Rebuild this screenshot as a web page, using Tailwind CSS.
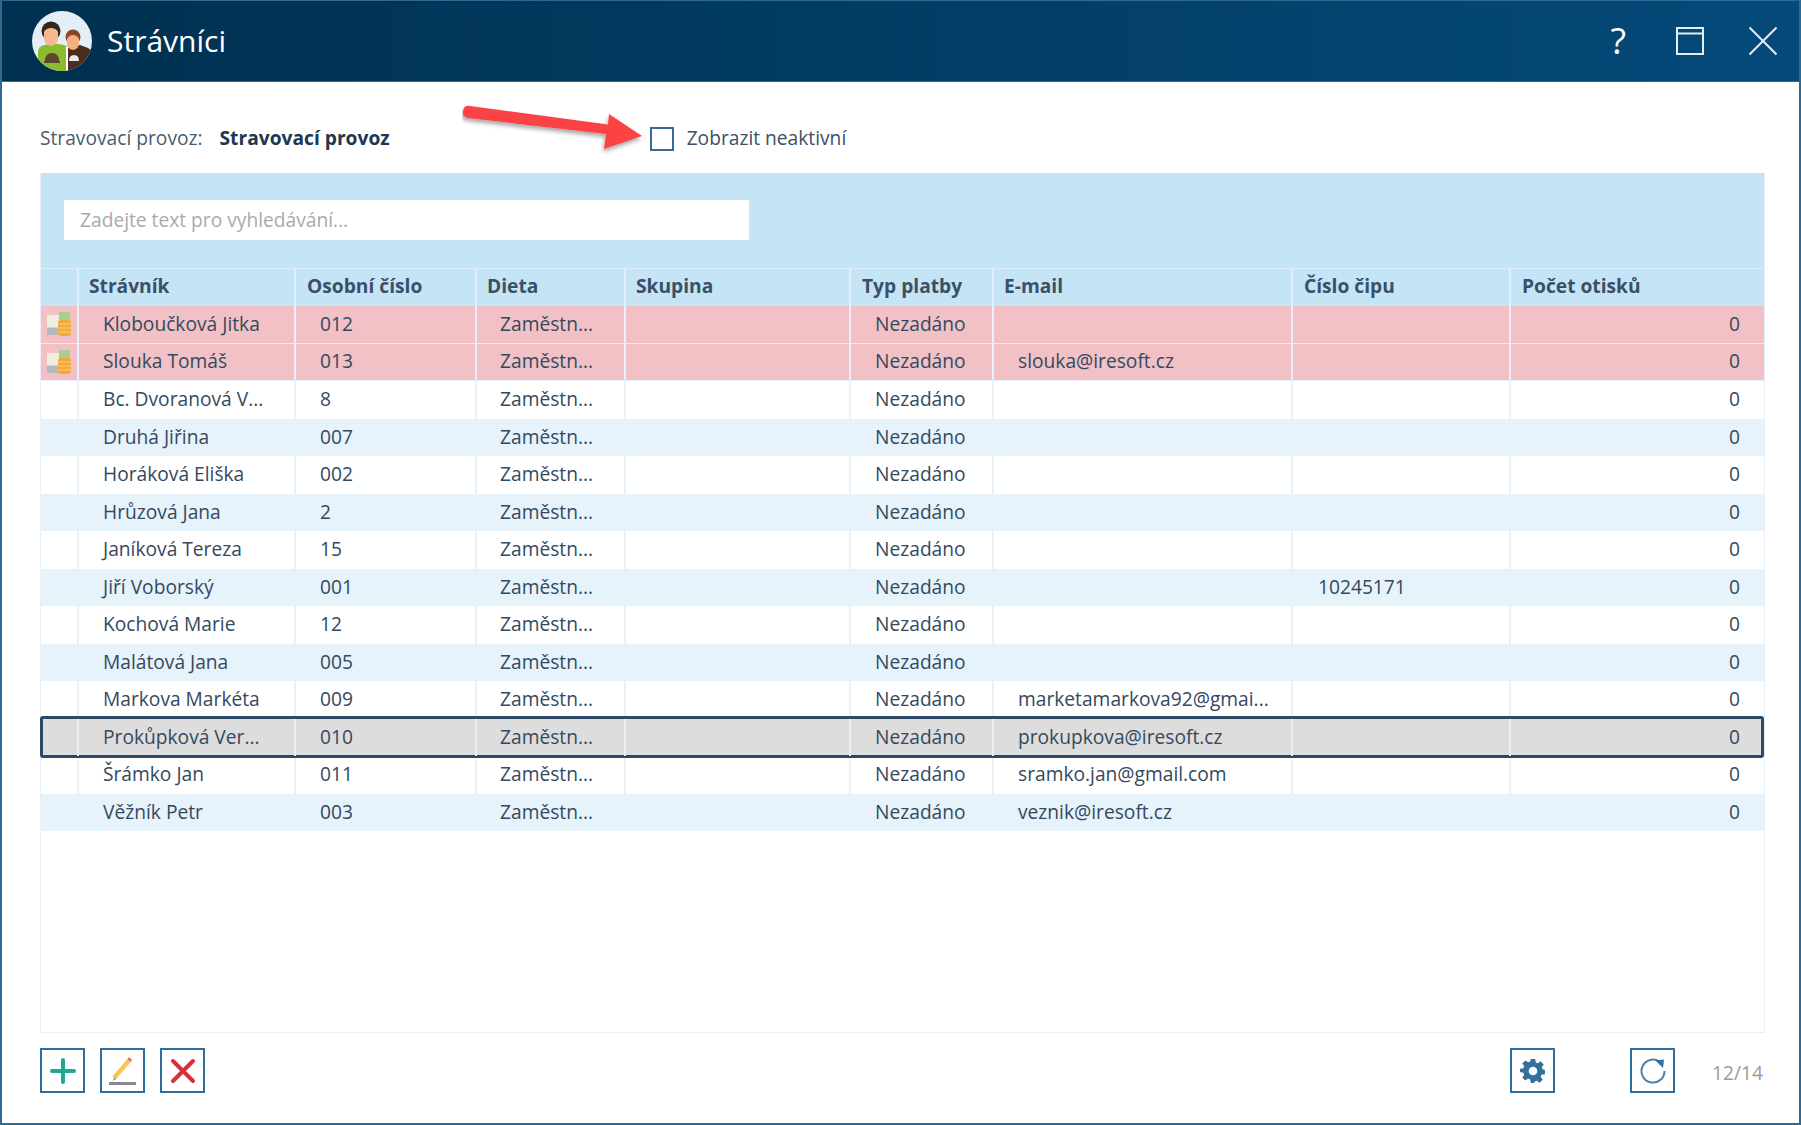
<!DOCTYPE html>
<html lang="cs">
<head>
  <meta charset="UTF-8" />
  <title>Strávníci</title>
  <script src="https://cdn.jsdelivr.net/npm/@tailwindcss/browser@4"></script>
</head>
<body class="bg-white">
  <div class="relative flex flex-col w-[1801px] h-[1125px] overflow-hidden bg-white border-x-2 border-b-2 border-[#2f6a94] font-['Open_Sans',sans-serif] text-[19.2px] text-[#34495e]">

    <!-- title bar -->
    <header class="flex items-center h-[82px] shrink-0 border-t border-b border-[#2f6a94] bg-gradient-to-r from-[#00304f] to-[#054a7a] text-white">
      <svg class="ml-[30px] w-[60px] h-[60px]" viewBox="0 0 60 60">
        <defs><clipPath id="avatar"><circle cx="30" cy="30" r="30" /></clipPath></defs>
        <g clip-path="url(#avatar)">
          <rect width="60" height="60" fill="#e3eef6" />
          <path d="M6 60V41q0-6 7-7l7-2 12 2q4 1 4 6v20z" fill="#8dbb2f" />
          <path d="M34 60V38l6-3 8-1 8 3q4 2 4 6v17z" fill="#4b2d1f" />
          <rect x="34" y="36" width="2" height="24" fill="#fff" />
          <circle cx="19" cy="20" r="9.500" fill="#33261f" />
          <path d="M12 21q2-4 7-4t7 4v5q0 8-7 9-7-1-7-9z" fill="#f5b78e" />
          <circle cx="41" cy="26" r="7.500" fill="#8a4522" />
          <path d="M35 28q2-4 6-4t6 4v4q0 6-6 7-6-1-6-7z" fill="#f5ae80" />
          <path d="M13 50q0-8 7-8t7 8z" fill="#5c4630" />
          <rect x="12" y="50" width="16" height="2" fill="#5c4630" />
          <path d="M37 50q0-6 5-6t5 6z" fill="#e8e8e8" />
        </g>
      </svg>
      <h1 class="ml-[15px] text-[30px] leading-none font-normal">Strávníci</h1>
      <div class="ml-auto flex items-center">
        <span class="text-[36px] leading-none font-normal mr-[50px]">?</span>
        <svg class="w-[28px] h-[28px] mr-[44px]" viewBox="0 0 28 28" fill="none" stroke="#e6eef4" stroke-width="2">
          <rect x="1" y="1" width="26" height="26" />
          <path d="M1 6.500h26" />
        </svg>
        <svg class="w-[30px] h-[30px] mr-[21px]" viewBox="0 0 30 30" fill="none" stroke="#e6eef4" stroke-width="2">
          <path d="M1.500 1.500l27 27M28.500 1.500l-27 27" />
        </svg>
      </div>
    </header>

    <!-- filter row -->
    <div class="flex items-center h-[91px] shrink-0 pt-[22px] pl-[38px]">
      <span class="text-[#4a5c6e]">Stravovací provoz:</span>
      <span class="ml-[17px] font-bold text-[#22364e]">Stravovací provoz</span>
      <span class="ml-[260px] w-[24px] h-[24px] border-2 border-[#3a6a96]"></span>
      <span class="ml-[13px] text-[#3c5068]">Zobrazit neaktivní</span>
    </div>

    <!-- table -->
    <main class="flex flex-col flex-1 min-h-0 ml-[38px] mr-[34px] border border-t-0 border-[#e8f0fb]">
      <div class="h-[95px] shrink-0 bg-[#c5e4f6] pt-[27px] pl-[23px]">
        <div class="flex items-center w-[685px] h-[40px] pl-[16px] bg-white text-[#aaaaaa]">Zadejte text pro vyhledávání...</div>
      </div>
      <div class="grid grid-cols-[38px_217px_181px_149px_225px_143px_299px_218px_1fr] h-[38px] shrink-0 items-stretch bg-[#c5e4f6] border-t border-[#dcecf8] font-bold text-[#3a5068]">
        <div class="border-r-2 border-[#e3f0fa]"></div>
        <div class="flex items-center pb-[3px] pl-[10px] border-r-2 border-[#e3f0fa]">Strávník</div>
        <div class="flex items-center pb-[3px] pl-[11px] border-r-2 border-[#e3f0fa]">Osobní číslo</div>
        <div class="flex items-center pb-[3px] pl-[10px] border-r-2 border-[#e3f0fa]">Dieta</div>
        <div class="flex items-center pb-[3px] pl-[10px] border-r-2 border-[#e3f0fa]">Skupina</div>
        <div class="flex items-center pb-[3px] pl-[11px] border-r-2 border-[#e3f0fa]">Typ platby</div>
        <div class="flex items-center pb-[3px] pl-[10px] border-r-2 border-[#e3f0fa]">E-mail</div>
        <div class="flex items-center pb-[3px] pl-[11px] border-r-2 border-[#e3f0fa]">Číslo čipu</div>
        <div class="flex items-center pb-[3px] pl-[11px]">Počet otisků</div>
      </div>
      <div id="rows" class="flex-1 min-h-0"></div>
    </main>

    <!-- toolbar -->
    <footer class="flex items-start h-[90px] shrink-0 pt-[15px] pl-[38px]">
      <button class="flex items-center justify-center w-[45px] h-[45px] border-2 border-[#2f6f9f]">
        <svg class="w-[28px] h-[28px]" viewBox="0 0 28 28" stroke="#1fa98f" stroke-width="4" stroke-linecap="round"><path d="M14 3v22M3 14h22" /></svg>
      </button>
      <button class="flex items-center justify-center w-[45px] h-[45px] ml-[15px] border-2 border-[#2f6f9f]">
        <svg class="w-[30px] h-[30px]" viewBox="0 0 30 30" fill="none">
          <path d="M6 22L22 3.500" stroke="#f6c65b" stroke-width="4.500" />
          <path d="M21 4.500l1.500-2" stroke="#e8697a" stroke-width="4" />
          <path d="M6.500 20.500L4.500 25l4-2z" fill="#a9a3a8" />
          <path d="M1 27.500h27" stroke="#8d8296" stroke-width="3" />
        </svg>
      </button>
      <button class="flex items-center justify-center w-[45px] h-[45px] ml-[15px] border-2 border-[#2f6f9f]">
        <svg class="w-[26px] h-[26px]" viewBox="0 0 26 26" stroke="#d6303a" stroke-width="4" stroke-linecap="round"><path d="M3 3l20 20M23 3L3 23" /></svg>
      </button>
      <button class="flex items-center justify-center w-[45px] h-[45px] ml-auto border-2 border-[#2f6f9f]">
        <svg class="w-[26px] h-[26px]" viewBox="0 0 24 24" fill="#34709c">
          <path fill-rule="evenodd" d="M10 1h4l.6 3.100 1.900.8 2.600-1.800 2.800 2.800-1.800 2.600.8 1.900L23 11v4l-3.100.5-.8 1.900 1.800 2.600-2.800 2.800-2.600-1.800-1.900.8L13 23h-3l-.6-3.200-1.900-.8-2.600 1.800-2.800-2.800 1.800-2.600-.8-1.900L0 13v-3l3.100-.6.800-1.900L2.100 5l2.800-2.800L7.500 4l1.900-.8zM12 8a4 4 0 1 0 0 8 4 4 0 0 0 0-8z" />
        </svg>
      </button>
      <button class="flex items-center justify-center w-[45px] h-[45px] ml-[75px] border-2 border-[#2f6f9f]">
        <svg class="w-[28px] h-[28px]" viewBox="0 0 28 28" fill="none">
          <path d="M22 5.800A11.500 11.500 0 1 0 25.500 14" stroke="#4a80a8" stroke-width="2" />
          <path d="M16.500 3.500L25 2.500l-1 8.500z" fill="#34709c" />
        </svg>
      </button>
      <span class="ml-[37px] mr-[36px] mt-[11px] text-[#9a9a9a]">12/14</span>
    </footer>

    <!-- red annotation arrow -->
    <svg class="absolute left-[460px] top-[100px] w-[190px] h-[60px]" viewBox="460 100 190 60">
      <defs>
        <filter id="arrowshadow" x="-10%" y="-30%" width="120%" height="170%">
          <feDropShadow dx="-1" dy="3" stdDeviation="2" flood-color="#000" flood-opacity="0.35" />
        </filter>
      </defs>
      <path d="M468 106L606 124.500 607 114 640 136 602 149 604 134 466 118q-6-1-5-7 1-6 7-5z" fill="#fb4245" filter="url(#arrowshadow)" />
    </svg>
  </div>

  <script>
    const people = [
      ["Kloboučková Jitka", "012", "", ""],
      ["Slouka Tomáš", "013", "slouka@iresoft.cz", ""],
      ["Bc. Dvoranová V...", "8", "", ""],
      ["Druhá Jiřina", "007", "", ""],
      ["Horáková Eliška", "002", "", ""],
      ["Hrůzová Jana", "2", "", ""],
      ["Janíková Tereza", "15", "", ""],
      ["Jiří Voborský", "001", "", "10245171"],
      ["Kochová Marie", "12", "", ""],
      ["Malátová Jana", "005", "", ""],
      ["Markova Markéta", "009", "marketamarkova92@gmai...", ""],
      ["Prokůpková Ver...", "010", "prokupkova@iresoft.cz", ""],
      ["Šrámko Jan", "011", "sramko.jan@gmail.com", ""],
      ["Věžník Petr", "003", "veznik@iresoft.cz", ""]
    ];

    const moneyIcon = `
      <svg class="w-[26px] h-[26px]" viewBox="0 0 26 26">
        <rect x="1" y="4" width="15" height="12" fill="#f1ede0" />
        <rect x="13" y="1" width="11" height="9" fill="#a9cf8e" />
        <rect x="1" y="17" width="13" height="7" fill="#b4b8bc" />
        <rect x="12" y="9" width="13" height="16" rx="3" fill="#f2a93b" />
        <path d="M12 13h13M12 17h13M12 21h13" stroke="#fbd07a" stroke-width="1" />
      </svg>`;

    const rows = document.getElementById("rows");
    people.forEach((p, i) => {
      let rowBg = i % 2 === 0 ? "bg-white" : "bg-[#e6f3fb]";
      if (i < 2) rowBg = "bg-[#f1c1c5] border-b border-[#e8eefc]";
      if (i === 11) rowBg = "bg-[#dddddd] z-10";
      const row = document.createElement("div");
      row.className = `relative grid grid-cols-[38px_217px_181px_149px_225px_143px_299px_218px_1fr] h-[37.5px] ${rowBg}`;
      row.innerHTML = `
        ${i === 11 ? '<div class="absolute -left-px right-0 -top-[3px] -bottom-[2px] border-[3px] border-[#2c4a66] rounded-[3px]"></div>' : ""}
        <div class="relative flex items-center justify-center pr-px border-r-2 border-[#e8f0fb]">${i < 2 ? moneyIcon : ""}</div>
        <div class="relative flex items-center pl-[24px] border-r-2 border-[#e8f0fb] whitespace-nowrap">${p[0]}</div>
        <div class="relative flex items-center pl-[24px] border-r-2 border-[#e8f0fb]">${p[1]}</div>
        <div class="relative flex items-center pl-[23px] border-r-2 border-[#e8f0fb]">Zaměstn...</div>
        <div class="relative border-r-2 border-[#e8f0fb]"></div>
        <div class="relative flex items-center pl-[24px] border-r-2 border-[#e8f0fb]">Nezadáno</div>
        <div class="relative flex items-center pl-[24px] border-r-2 border-[#e8f0fb] whitespace-nowrap">${p[2]}</div>
        <div class="relative flex items-center pl-[25px] border-r-2 border-[#e8f0fb]">${p[3]}</div>
        <div class="relative flex items-center justify-end pr-[24px]">0</div>
      `;
      rows.appendChild(row);
    });
  </script>
</body>
</html>
